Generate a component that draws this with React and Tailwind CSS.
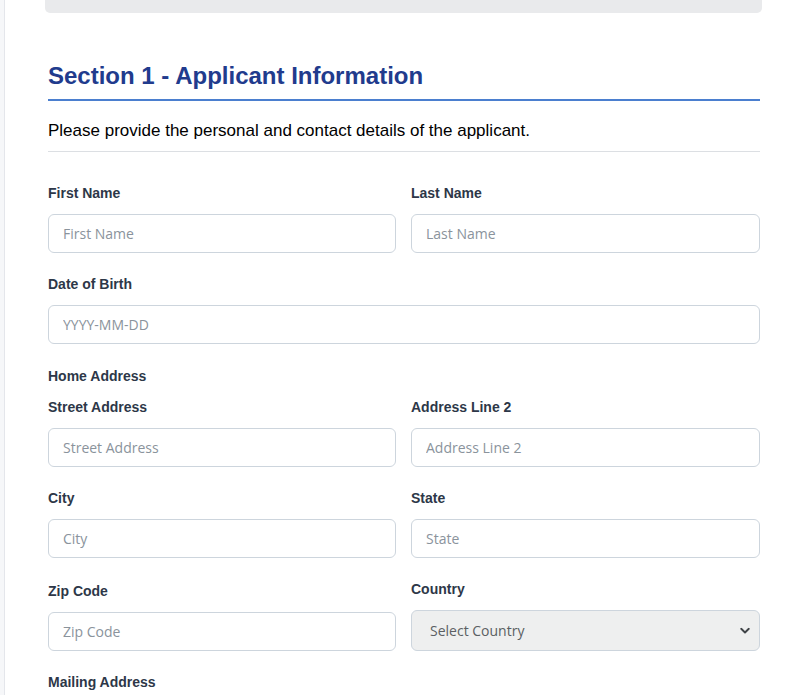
import React from 'react';

const Field = ({ label, placeholder, className = '' }) => (
  <div className={`flex flex-col ${className}`}>
    <label className="text-[14px] leading-5 font-bold text-[#2d3748] mb-[11px]">{label}</label>
    <input
      type="text"
      placeholder={placeholder}
      className="h-[39px] w-full rounded-[6px] border border-[#cdd5dd] bg-white px-[14px] text-[14px] text-[#333] placeholder:text-[#8a939c] outline-none"
      style={{ fontFamily: '"Open Sans", sans-serif' }}
    />
  </div>
);

const App = () => {
  return (
    <div className="min-h-screen bg-[#f6f7f9] pl-[4px]" style={{ fontFamily: '"Liberation Sans", Arial, sans-serif' }}>
      <div className="min-h-screen bg-white border-l border-[#e4e6eb]">
        {/* tail of the previous card */}
        <div className="ml-[40px] w-[717px] h-[13px] bg-[#e9eaec] rounded-b-[5px]" />

        <div className="ml-[43px] w-[712px]">
          <h2 className="mt-[49px] text-[24px] leading-[28px] font-bold text-[#213b8d] pb-[9px] border-b-2 border-[#4b7fcf]">
            Section 1 - Applicant Information
          </h2>
          <p className="mt-[18px] text-[17px] leading-[24px] text-black pb-[8px] border-b border-[#dcdfe3]">
            Please provide the personal and contact details of the applicant.
          </p>

          <div className="mt-[31px] grid grid-cols-[348px_349px] gap-x-[15px]">
            <Field label="First Name" placeholder="First Name" />
            <Field label="Last Name" placeholder="Last Name" />
          </div>

          <Field className="mt-[21px]" label="Date of Birth" placeholder="YYYY-MM-DD" />

          <div className="mt-[22px] text-[14px] leading-5 font-bold text-[#2d3748] mb-[11px]">Home Address</div>

          <div className="grid grid-cols-[348px_349px] gap-x-[15px] gap-y-[21px] items-end">
            <Field label="Street Address" placeholder="Street Address" />
            <Field label="Address Line 2" placeholder="Address Line 2" />
            <Field label="City" placeholder="City" />
            <Field label="State" placeholder="State" />
            <Field label="Zip Code" placeholder="Zip Code" />
            <div className="flex flex-col">
              <label className="text-[14px] leading-5 font-bold text-[#2d3748] mb-[11px]">Country</label>
              <div className="relative">
                <select
                  defaultValue=""
                  className="appearance-none h-[41px] w-full rounded-[6px] border border-[#cdd5dd] bg-[#eeefef] pl-[18px] pr-8 text-[14px] text-[#5b5f63] outline-none"
                  style={{ fontFamily: '"Open Sans", sans-serif' }}
                >
                  <option value="">Select Country</option>
                  <option>United States</option>
                  <option>Canada</option>
                </select>
                <svg className="pointer-events-none absolute right-[10px] top-1/2 -translate-y-1/2" width="10" height="7" viewBox="0 0 10 7">
                  <path d="M1.2 1.3 L5 5 L8.8 1.3" fill="none" stroke="#3f4347" strokeWidth="1.9" strokeLinecap="round" strokeLinejoin="round" />
                </svg>
              </div>
            </div>
          </div>

          <div className="mt-[21px] text-[14px] leading-5 font-bold text-[#2d3748]">Mailing Address</div>
        </div>
      </div>
    </div>
  );
};

export default App;
